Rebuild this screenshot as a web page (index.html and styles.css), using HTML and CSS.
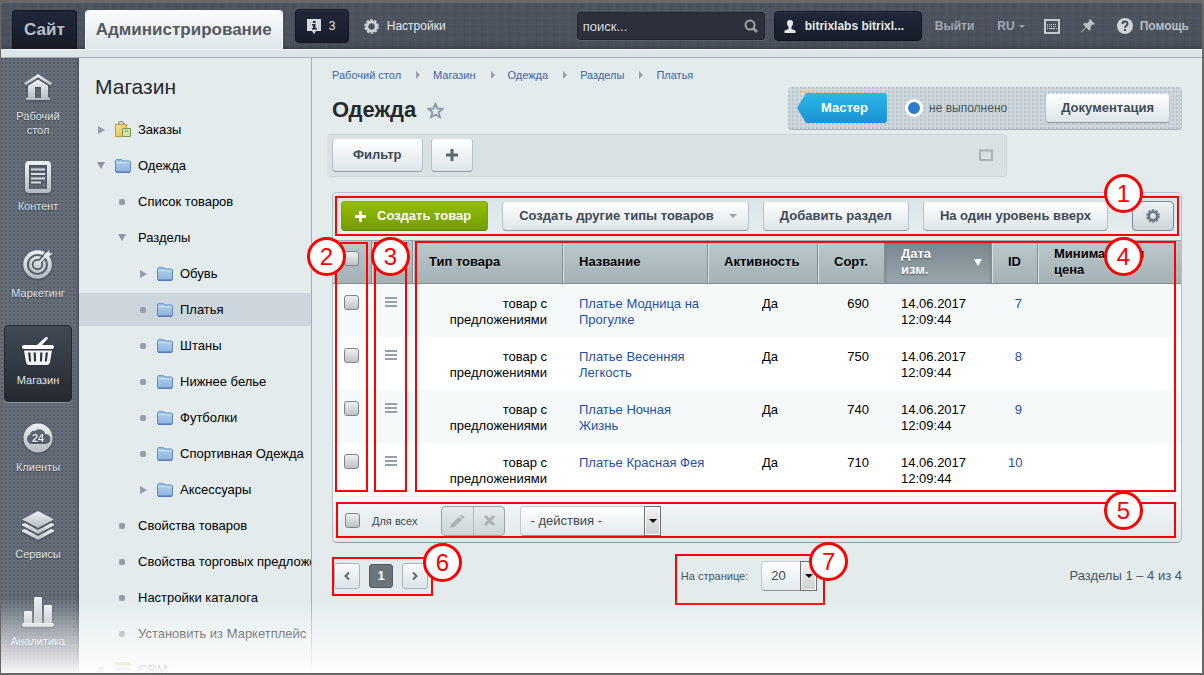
FILE: index.html
```html
<!DOCTYPE html>
<html lang="ru">
<head>
<meta charset="utf-8">
<meta name="viewport" content="width=device-width, initial-scale=1">
<title>Одежда</title>
<link rel="stylesheet" href="styles.css">
</head>
<body>
<svg class="defs" width="0" height="0" aria-hidden="true">
  <defs>
    <linearGradient id="metal" x1="0" y1="0" x2="0" y2="1"><stop offset="0" stop-color="#eef2f4"/><stop offset="1" stop-color="#b4bbbf"/></linearGradient>
    <linearGradient id="blue" x1="0" y1="0" x2="0" y2="1"><stop offset="0" stop-color="#b4d3ee"/><stop offset="1" stop-color="#8ab3dc"/></linearGradient>
    <linearGradient id="gold" x1="0" y1="0" x2="1" y2="1"><stop offset="0" stop-color="#fbe59a"/><stop offset="1" stop-color="#e0b23c"/></linearGradient>
  </defs>
  <symbol id="folder" viewBox="0 0 16 15">
    <path d="M.5 13.500v-11l1-1h5l1 1.500h7l1 1v9.500l-1 1h-13z" fill="url(#blue)" stroke="#5f87ba"/>
    <path d="M1.500 4.500h13" stroke="#d3e6f6"/><path d="M2 1.500h4.500v2H2z" fill="#8fb8e4"/><path d="M1 14h14" stroke="#4c70aa"/>
  </symbol>
  <symbol id="gear" viewBox="0 0 16 16">
    <circle cx="8" cy="8" r="4.900" fill="none" stroke="currentColor" stroke-width="3"/>
    <circle cx="8" cy="8" r="6.900" fill="none" stroke="currentColor" stroke-width="1.800" stroke-dasharray="2.700 1.635"/>
  </symbol>
</svg>
<div class="page">
  <header class="top">
    <nav class="tabs">
      <a class="tab" href="#">Сайт</a>
      <a class="tab tab-on" href="#">Администрирование</a>
    </nav>
    <button class="dark note" type="button">
      <svg width="14" height="15" viewBox="0 0 14 15"><path d="M0 0h14v12H9l-2 3-2-3H0z" fill="#d5dade"/><path d="M6 2h2.500v2H6zM5 5h3.500v4H10v1.500H5V9h1V6.500H5z" fill="#262c3a"/></svg>
      <span>3</span>
    </button>
    <a class="settings" href="#"><svg width="15" height="15"><use href="#gear"/></svg>Настройки</a>
    <form class="search">
      <input type="text" placeholder="поиск..." aria-label="поиск">
      <svg width="14" height="14" viewBox="0 0 14 14" fill="none" stroke="#9ca1a8"><circle cx="6" cy="6" r="4.500" stroke-width="2"/><path d="M9 9l4 4" stroke-width="2.500"/></svg>
    </form>
    <a class="dark user" href="#">
      <svg width="12" height="13" viewBox="0 0 12 13" fill="#e4e8eb"><path d="M6 0c2 0 3 1.200 3 3 0 1.600-.6 3-1.500 3.800V9l4 1.500V13H.5v-2.500l4-1.500V6.800C3.600 6 3 4.600 3 3c0-1.800 1-3 3-3z"/></svg>
      <span>bitrixlabs bitrixl...</span>
    </a>
    <a class="top-link exit" href="#">Выйти</a>
    <a class="top-link lang" href="#">RU<i class="tri-s"></i></a>
    <button class="ico keys" type="button" aria-label="Клавиши"><svg width="16" height="15" viewBox="0 0 16 15"><path d="M1 1h14v13H1z" fill="none" stroke="#c5cbd0" stroke-width="2"/><path d="M3 5.500h10M3 7.500h10" stroke="#c5cbd0" stroke-dasharray="1 1"/><path d="M3 9.500h1M5 9.500h6M12 9.500h1" stroke="#c5cbd0"/></svg></button>
    <button class="ico pin" type="button" aria-label="Закрепить"><svg width="14" height="14" viewBox="0 0 14 14"><path d="M9 0l5 5-1.500.7-1-.2-2 2.200.2 2.800-1.300 1.200-3-3.200L.5 13.500 0 13l4.800-5L2 5.200 3.200 4l3 .2 2-2L8 1z" fill="#bcc2c7"/></svg></button>
    <a class="top-link help" href="#"><svg width="16" height="16" viewBox="0 0 16 16"><circle cx="8" cy="8" r="8" fill="#ced4d8"/><path d="M5.500 6c0-3.200 5-3.200 5 0 0 1.800-2.500 1.800-2.500 3.800" fill="none" stroke="#434a56" stroke-width="2"/><path d="M7 11h2v2H7z" fill="#434a56"/></svg>Помощь</a>
  </header>
  <div class="strip"></div>

  <div class="main">
    <nav class="rail">
      <a href="#"><svg width="28" height="28" viewBox="0 0 28 28" fill="url(#metal)"><path d="M14 1L0 10l1.500 2.500L14 4.500l12.500 8L28 10z"/><path d="M14 6.500l-10 6.300v11.700H2V27h24v-2.500h-2V12.800zM11 25V14h6v11z" fill-rule="evenodd"/></svg><span>Рабочий<br>стол</span></a>
      <a href="#"><svg width="26" height="32" viewBox="0 0 26 32"><path d="M4 0h18a4 4 0 014 4v24a4 4 0 01-4 4H4a4 4 0 01-4-4V4a4 4 0 014-4zm0 4v24h18V4z" fill="url(#metal)" fill-rule="evenodd"/><path d="M6 8.500h14M6 13h14M6 17.500h14M6 21.500h10" stroke="#d7dde0" stroke-width="2"/></svg><span>Контент</span></a>
      <a href="#"><svg width="30" height="30" viewBox="0 0 30 30"><circle cx="14.500" cy="15.500" r="14.300" fill="url(#metal)"/><circle cx="14.500" cy="15.500" r="9.500" fill="none" stroke="#5c6370" stroke-width="2.200"/><circle cx="14.500" cy="15.500" r="4.800" fill="none" stroke="#5c6370" stroke-width="2"/><path d="M18 11.500l6-7" stroke="#5c6370" stroke-width="5"/><path d="M14.500 15.500L25 4.500" stroke="#e0e5e7" stroke-width="2.200"/><path d="M21 5.500L26.500 1v3.300H30L24.500 9H21z" fill="#e0e5e7"/></svg><span>Маркетинг</span></a>
      <a class="on" href="#"><svg width="32" height="28" viewBox="0 0 32 28"><path d="M0 10a2 2 0 012-2h13l8.500-7.700a1 1 0 012 1.700L20 8h10a2 2 0 010 4H2a2 2 0 01-2-2z" fill="#fff"/><path d="M2 13.500h28l-2 12a3 3 0 01-3 2.500H7a3 3 0 01-3-2.500zm4 2l1.200 9h2l-.9-9zm5.500 0l.6 9h2l-.3-9zm6.700 0l-.3 9h2l.6-9zm5.500 0l-.9 9h2l1.200-9z" fill="#f2f4f5" fill-rule="evenodd"/></svg><span>Магазин</span></a>
      <a href="#"><svg width="30" height="30" viewBox="0 0 30 30"><circle cx="15" cy="15" r="14.500" fill="url(#metal)"/><path d="M8 21a5 5 0 01-1-9.500 4 4 0 015-3.500 6 6 0 0110 3 5 5 0 011 10z" fill="#5c6370"/><text x="15" y="19" text-anchor="middle" class="cloud">24</text></svg><span>Клиенты</span></a>
      <a href="#"><svg width="32" height="29" viewBox="0 0 32 29" fill="url(#metal)"><path d="M16 0l16 8.500L16 17 0 8.500z"/><path d="M0 13l3-1 13 7 13-7 3 1v1.500L16 23 0 14.500z"/><path d="M0 19l3-1 13 7 13-7 3 1v1.500L16 29 0 20.500z"/></svg><span>Сервисы</span></a>
      <a href="#"><svg width="32" height="30" viewBox="0 0 32 30" fill="url(#metal)"><rect x="2" y="14" width="8" height="14" rx="1"/><rect x="12" y="0" width="8" height="28" rx="1"/><rect x="22" y="8" width="8" height="20" rx="1"/><rect y="26" width="32" height="4" rx="2"/></svg><span>Аналитика</span></a>
    </nav>

    <aside class="tree">
      <h2>Магазин</h2>
      <ul>
        <li><a href="#"><i class="mk shut"></i><svg width="16" height="17" viewBox="0 0 16 17"><path d="M3.500 4.500V3a2.500 2.500 0 015 0v1.500" fill="none" stroke="#77756a"/><path d="M.5 3.500h11v12H.5z" fill="url(#gold)" stroke="#c39a38"/><path d="M7.500 7.500h8v8h-8z" fill="#cfe0a4" stroke="#83994f"/><path d="M10 10h3" stroke="#7b8e50"/></svg>Заказы</a></li>
        <li><a href="#"><i class="mk open"></i><svg width="16" height="15"><use href="#folder"/></svg>Одежда</a></li>
        <li class="l2"><a href="#"><i class="mk dot"></i>Список товаров</a></li>
        <li class="l2"><a href="#"><i class="mk open"></i>Разделы</a></li>
        <li class="l3"><a href="#"><i class="mk shut"></i><svg width="16" height="15"><use href="#folder"/></svg>Обувь</a></li>
        <li class="l3 on"><a href="#"><i class="mk dot"></i><svg width="16" height="15"><use href="#folder"/></svg>Платья</a></li>
        <li class="l3"><a href="#"><i class="mk dot"></i><svg width="16" height="15"><use href="#folder"/></svg>Штаны</a></li>
        <li class="l3"><a href="#"><i class="mk dot"></i><svg width="16" height="15"><use href="#folder"/></svg>Нижнее белье</a></li>
        <li class="l3"><a href="#"><i class="mk dot"></i><svg width="16" height="15"><use href="#folder"/></svg>Футболки</a></li>
        <li class="l3"><a href="#"><i class="mk dot"></i><svg width="16" height="15"><use href="#folder"/></svg>Спортивная Одежда</a></li>
        <li class="l3"><a href="#"><i class="mk shut"></i><svg width="16" height="15"><use href="#folder"/></svg>Аксессуары</a></li>
        <li class="l2"><a href="#"><i class="mk dot"></i>Свойства товаров</a></li>
        <li class="l2"><a href="#"><i class="mk dot"></i>Свойства торговых предложений</a></li>
        <li class="l2"><a href="#"><i class="mk dot"></i>Настройки каталога</a></li>
        <li class="l2"><a href="#"><i class="mk dot"></i>Установить из Маркетплейс</a></li>
        <li><a href="#"><i class="mk dot"></i><svg width="16" height="15" viewBox="0 0 16 15"><path d="M0 0h16v4H0z" fill="#a2b541"/><path d="M2 5h12v4H2z" fill="#6fa6d2"/><path d="M4 10h8v4H4z" fill="#d0806a"/></svg>CRM</a></li>
      </ul>
    </aside>

    <main class="content">
      <nav class="crumbs">
        <a href="#">Рабочий стол</a><a href="#">Магазин</a><a href="#">Одежда</a><a href="#">Разделы</a><a href="#">Платья</a>
      </nav>
      <div class="heading">
        <h1>Одежда</h1>
        <button class="star" type="button" aria-label="В избранное"><svg width="17" height="17" viewBox="0 0 17 17"><path d="M8.500 1.800l2 4.700 5 .4-3.800 3.300 1.200 5-4.400-2.700-4.400 2.700 1.200-5-3.800-3.300 5-.4z" fill="none" stroke="#8c98a3" stroke-width="1.900"/></svg></button>
        <div class="wizard">
          <button class="master" type="button"><span>Мастер</span></button>
          <span class="state"><i></i>не выполнено</span>
          <button class="btn" type="button">Документация</button>
        </div>
      </div>

      <div class="filter">
        <button class="btn tall" type="button">Фильтр</button>
        <button class="btn tall plus" type="button" aria-label="Добавить"><svg width="14" height="14" viewBox="0 0 14 14"><path d="M7 1v12M1 7h12" stroke="#5f656d" stroke-width="3"/></svg></button>
        <button class="ico fold" type="button" aria-label="Свернуть"><svg width="14" height="12" viewBox="0 0 14 12"><path d="M1 1.500h12V11H1z" fill="none" stroke="#a9b2b5" stroke-width="2"/></svg></button>
      </div>

      <section class="list">
        <div class="tools">
          <button class="btn green" type="button"><svg width="11" height="11" viewBox="0 0 11 11"><path d="M5.500 0v11M0 5.500h11" stroke="#fff" stroke-width="3"/></svg>Создать товар</button>
          <button class="btn" type="button">Создать другие типы товаров<i class="tri-s"></i></button>
          <button class="btn" type="button">Добавить раздел</button>
          <button class="btn" type="button">На один уровень вверх</button>
          <button class="btn cog" type="button" aria-label="Настроить"><svg width="14" height="14"><use href="#gear"/></svg></button>
          <div class="mark m1"><b>1</b></div>
        </div>
        <div class="grid">
          <table>
            <colgroup><col class="c-check"><col class="c-menu"><col class="c-type"><col class="c-name"><col class="c-act"><col class="c-sort"><col class="c-date"><col class="c-id"><col></colgroup>
            <thead>
              <tr><th class="check"><input type="checkbox" aria-label="Выбрать все"></th><th></th><th>Тип товара</th><th>Название</th><th>Активность</th><th>Сорт.</th><th class="sorted"><span>Дата изм.<i></i></span></th><th>ID</th><th>Минимальная цена</th></tr>
            </thead>
            <tbody>
              <tr><td class="check"><input type="checkbox" aria-label="Выбрать 7"></td><td class="menu"><button class="bars" type="button" aria-label="Действия"></button></td><td class="r">товар с предложениями</td><td class="name"><a href="#">Платье Модница на Прогулке</a></td><td class="act">Да</td><td class="r">690</td><td>14.06.2017 12:09:44</td><td class="r"><a href="#">7</a></td><td></td></tr>
              <tr><td class="check"><input type="checkbox" aria-label="Выбрать 8"></td><td class="menu"><button class="bars" type="button" aria-label="Действия"></button></td><td class="r">товар с предложениями</td><td class="name"><a href="#">Платье Весенняя Легкость</a></td><td class="act">Да</td><td class="r">750</td><td>14.06.2017 12:09:44</td><td class="r"><a href="#">8</a></td><td></td></tr>
              <tr><td class="check"><input type="checkbox" aria-label="Выбрать 9"></td><td class="menu"><button class="bars" type="button" aria-label="Действия"></button></td><td class="r">товар с предложениями</td><td class="name"><a href="#">Платье Ночная<br>Жизнь</a></td><td class="act">Да</td><td class="r">740</td><td>14.06.2017 12:09:44</td><td class="r"><a href="#">9</a></td><td></td></tr>
              <tr><td class="check"><input type="checkbox" aria-label="Выбрать 10"></td><td class="menu"><button class="bars" type="button" aria-label="Действия"></button></td><td class="r">товар с предложениями</td><td class="name"><a href="#">Платье Красная Фея</a></td><td class="act">Да</td><td class="r">710</td><td>14.06.2017 12:09:44</td><td class="r"><a href="#">10</a></td><td></td></tr>
            </tbody>
          </table>
          <div class="mark m2"><b>2</b></div>
          <div class="mark m3"><b>3</b></div>
          <div class="mark m4"><b>4</b></div>
        </div>
        <div class="bulk">
          <label class="all"><input type="checkbox">Для всех</label>
          <div class="pair">
            <button type="button" aria-label="Изменить"><svg width="15" height="14" viewBox="0 0 15 14" fill="#abb0b3"><path d="M0 14l1.200-4L9 2.800l3 3L4 13zM10 2l1.500-1.500 3 3L13 5z"/></svg></button>
            <button type="button" aria-label="Удалить"><svg width="11" height="11" viewBox="0 0 11 11"><path d="M1 1l9 9M10 1l-9 9" stroke="#abb0b3" stroke-width="3"/></svg></button>
          </div>
          <span class="pick action"><select aria-label="Действия"><option>- действия -</option></select><i></i></span>
          <div class="mark m5"><b>5</b></div>
        </div>
      </section>

      <div class="pager">
        <div class="pages">
          <button type="button" aria-label="Назад"><svg width="6" height="8" viewBox="0 0 6 8"><path d="M5 .5L1.500 4 5 7.500" fill="none" stroke="#5f6973" stroke-width="2"/></svg></button>
          <button type="button" class="cur">1</button>
          <button type="button" aria-label="Вперед"><svg width="6" height="8" viewBox="0 0 6 8"><path d="M1 .5L4.500 4 1 7.500" fill="none" stroke="#5f6973" stroke-width="2"/></svg></button>
          <div class="mark m6"><b>6</b></div>
        </div>
        <div class="per">
          <label for="per">На странице:</label>
          <span class="pick size"><select id="per"><option>20</option></select><i></i></span>
          <div class="mark m7"><b>7</b></div>
        </div>
        <span class="total">Разделы 1 – 4 из 4</span>
      </div>
    </main>
  </div>
  <div class="fade"></div>
</div>
</body>
</html>
```
FILE: styles.css
```css
* { box-sizing: border-box; }
body { margin: 0; font: 13px/16px "Liberation Sans", Arial, sans-serif; color: #000; }
a { color: inherit; text-decoration: none; }
button, input, select { font: inherit; color: inherit; margin: 0; }
button { cursor: pointer; }
h1, h2, ul { margin: 0; padding: 0; font-weight: normal; }
ul { list-style: none; }
svg { flex: none; display: block; }
.defs { position: absolute; }

.page {
  position: relative; display: flex; flex-direction: column;
  height: 100vh; min-height: 480px; overflow: hidden;
  border: solid #696969; border-width: 3px 2px 2px 1px; background: #e3ebed;
}

/* top bar */
.top {
  display: flex; align-items: center; height: 46px; padding: 0 13px 0 11px; flex: none;
  font-size: 12px; color: #e3e7ea;
  background:
    repeating-linear-gradient(90deg, rgba(255,255,255,.02) 0 1px, transparent 1px 4px, rgba(0,0,0,.04) 4px 5px, transparent 5px 9px),
    repeating-linear-gradient(rgba(255,255,255,.02) 0 1px, transparent 1px 3px, rgba(0,0,0,.04) 3px 4px, transparent 4px 7px),
    linear-gradient(#4d545f, #4b525d 85%, #3f4550);
}
.tabs { display: flex; gap: 8px; align-self: flex-end; }
.tab {
  height: 39px; line-height: 38px; padding: 0 11px; font-size: 17px; font-weight: bold; color: #b9c0c8;
  background: linear-gradient(#20273a, #171b26); border: 1px solid #12151d; border-bottom: 0; border-radius: 4px 4px 0 0;
}
.tab-on { padding: 0 10px; color: #555a62; background: linear-gradient(#fbfcfc, #dde6ea); border-color: #f5f8f9; }
.dark {
  display: flex; align-items: center; background: linear-gradient(#20273a, #191d29);
  border: 1px solid #12151d; border-radius: 4px; box-shadow: inset 0 1px 0 #2d3547;
}
.note { width: 54px; height: 34px; margin-left: 12px; padding: 0 0 0 11px; gap: 8px; }
.settings { display: flex; align-items: center; gap: 8px; margin-left: 15px; color: #e3e7ea; }
.settings svg { color: #cfd4d8; }
.search { position: relative; width: 188px; margin-left: auto; }
.search input {
  width: 100%; height: 28px; padding: 0 28px 0 5px; font-size: 13px; color: #d9dee1; background: #2c303c;
  border: 1px solid #22252f; border-radius: 3px; box-shadow: 0 1px 0 #5b626d;
}
.search input::placeholder { color: #d9dee1; opacity: 1; }
.search svg { position: absolute; right: 7px; top: 7px; }
.user { width: 148px; height: 30px; margin-left: 9px; padding: 0 9px; gap: 9px; font-weight: bold; }
.top-link { display: flex; align-items: center; font-weight: bold; color: #a3a9b1; }
.exit { margin-left: 13px; }
.lang { margin-left: 23px; }
.tri-s { width: 0; height: 0; border: 4px solid transparent; border-top-color: #9ba2a8; border-bottom: 0; }
.lang .tri-s { margin-left: 4px; border-width: 3px 3px 0; }
.ico { display: flex; padding: 0; border: 0; background: none; }
.keys { margin-left: 19px; }
.pin { margin-left: 21px; }
.help { margin-left: 22px; gap: 7px; color: #b9bfc5; }
.strip { flex: none; height: 9px; background: #dce5e9; border-bottom: 1px solid #a3aeb2; border-top: 1px solid #f6f9fa; }

.main { flex: 1; display: flex; min-height: 0; }

/* section rail */
.rail {
  flex: none; width: 78px; padding: 3px 7px 0 3px; display: flex; flex-direction: column; gap: 10px;
  background: radial-gradient(circle at 1px 1px, rgba(72,78,90,.5) 1px, transparent 1px) 0 0 / 4px 4px, linear-gradient(90deg, #656d79 95%, #4f5661);
}
.rail a {
  flex: none; display: grid; grid-template-rows: 32px auto; gap: 6px; min-height: 77px; padding: 10px 0 4px;
  justify-items: center; align-items: center; align-content: start; text-align: center;
  font-size: 11px; line-height: 14px; color: #dde2e6; text-shadow: 0 1px 1px #3b404a;
}
.rail svg { filter: drop-shadow(0 1px 1px rgba(30,34,42,.5)); }
.rail .on { background: linear-gradient(#434954, #242932); border: 1px solid #22262e; border-radius: 4px; padding-top: 9px; box-shadow: 0 1px 0 #8d949d; }
.cloud { font: bold 11px "Liberation Sans", Arial, sans-serif; fill: #e3e8ea; }

/* tree */
.tree { flex: none; width: 233px; overflow: hidden; background: #e3ebed; border-right: 1px solid #9eb0bc; }
.tree h2 { padding: 17px 0 15px 16px; font-size: 21px; line-height: 23px; color: #26292d; }
.tree ul { display: grid; gap: 3px; }
.tree a { display: flex; align-items: center; height: 33px; padding-left: 17px; white-space: nowrap; }
.tree svg { margin-right: 7px; }
.tree .l2 a { padding-left: 38px; }
.tree .l2 .mk { margin-right: 11px; }
.tree .l3 a { padding-left: 59px; }
.tree .on { background: #ccd6dc; }
.mk { flex: none; display: flex; justify-content: center; width: 10px; margin-right: 9px; }
.mk::before { content: ""; }
.dot::before { width: 6px; height: 6px; border-radius: 2px; background: #949da8; }
.shut::before { border: 4px solid transparent; border-left: 7px solid #949da8; border-right: 0; }
.open::before { border: 4px solid transparent; border-top: 7px solid #8d97a2; border-bottom: 0; }

/* content */
.content { flex: 1; min-width: 0; padding: 10px 20px 0 20px; }
.crumbs { display: flex; font-size: 11px; line-height: 14px; color: #3f64a5; }
.crumbs a { display: flex; align-items: center; }
.crumbs a + a::before { content: ""; margin: 0 13px 0 15px; border: 4px solid transparent; border-left-color: #97a0a8; border-right: 0; }
.heading { display: flex; align-items: center; margin-top: 5px; }
h1 { padding-top: 2px; font-size: 22px; line-height: 26px; font-weight: bold; color: #26292d; }
.star { padding: 4px 0 0; margin-left: 11px; border: 0; background: none; }
.wizard {
  display: flex; align-items: center; height: 43px; margin-left: auto; padding: 0 12px 0 9px; border-radius: 4px;
  background: radial-gradient(circle at 1px 1px, #b9c5cb 1px, transparent 1px) 0 0 / 4px 4px, #cdd7dc; border-bottom: 1px solid #a5b0b5;
}
.master {
  width: 90px; height: 30px; padding: 0 0 0 5px; border: 0; color: #fff; font-weight: bold; border-radius: 3px;
  background: linear-gradient(#2bb7e6, #1b92d4); clip-path: polygon(0 50%, 9px 0, 100% 0, 100% 100%, 9px 100%);
}
.state { display: flex; align-items: center; gap: 6px; margin: 0 38px 0 18px; font-size: 12px; color: #4b5560; }
.state i { flex: none; width: 18px; height: 18px; border: 3px solid #fff; border-radius: 50%; background: #2a7ecb; }
.btn {
  display: flex; align-items: center; justify-content: center; height: 30px; padding: 0 16px; white-space: nowrap;
  font-weight: bold; color: #3f4b54; background: linear-gradient(#fff, #dde5e9);
  border: 1px solid #b7c2c8; border-top-color: #d9e1e4; border-bottom-color: #8f9ba1; border-radius: 4px;
}
.wizard .btn { padding: 0 15px; }
.filter {
  display: flex; align-items: center; gap: 8px; width: 80%; height: 43px; margin: 4px 0 15px -5px; padding: 0 13px 1px 4px;
  background: #d9e1e3; border: 1px solid #ccd5d8; border-left-color: #d9e1e3; border-radius: 4px;
}
.filter .tall { height: 34px; padding: 0 20px; }
.filter .plus { padding: 0 13px; }
.fold { margin-left: auto; }
.list { border: 1px solid #b2bfc5; border-bottom-color: #8f9a9f; border-radius: 5px; }
.tools {
  position: relative; display: flex; align-items: center; gap: 14px; height: 47px; padding: 0 7px 2px 8px;
  background: linear-gradient(#dae3e6, #e9eff1); border-top: 1px solid #f5f8f9; border-radius: 4px 4px 0 0;
}
.tools .tri-s { margin: 0 -5px 0 15px; }
.tools .green { padding: 0 16px 0 13px; gap: 11px; color: #fff; background: linear-gradient(#95bd00, #739c00); border-color: #85ac00 #7ba200 #5c7e00; }
.tools .cog { width: 42px; padding: 0; margin-left: auto; color: #6f787e; border-color: #7e898f; background: linear-gradient(#eef1f3, #ccd5d9); }

/* goods table */
.grid { position: relative; }
table { width: 100%; table-layout: fixed; border-collapse: separate; border-spacing: 0; }
.c-check { width: 39px; }
.c-menu { width: 41px; }
.c-type { width: 150px; }
.c-name { width: 145px; }
.c-act { width: 110px; }
.c-sort { width: 67px; }
.c-date { width: 107px; }
.c-id { width: 46px; }
th {
  height: 44px; padding: 0 15px 0 16px; text-align: left; background: linear-gradient(#bac8cd, #a5b2b4);
  border: solid #838f93; border-width: 1px 1px 1px 0; border-top-color: #9aa7ac; box-shadow: inset 1px 0 0 #d6dfe2; text-shadow: 0 1px 0 #d0dadd;
}
th:last-child { padding-right: 30px; border-right: 0; }
.sorted { padding-right: 9px; color: #fff; text-shadow: 0 1px 1px #4e585e; background: linear-gradient(#7a868d, #98a5ab); box-shadow: inset 0 2px 3px #69757c; }
.sorted span { display: flex; align-items: center; gap: 32px; }
.sorted i { flex: none; border: 4px solid transparent; border-top: 7px solid #fff; border-bottom: 0; }
td { height: 53px; padding: 12px 16px 9px; vertical-align: top; background: #fff; }
tbody tr:nth-child(odd) td { background: #f5f9fa; }
tbody tr:last-child td { border-bottom: 1px solid #edf1f2; }
td a { color: #1f4fa8; }
.r { text-align: right; }
td.name { padding-right: 0; }
td.act { padding-left: 54px; }
td.menu { padding: 13px 0 0 13px; }
.check { padding: 11px 0 0 11px; }
th.check { padding: 0 0 8px 11px; }
input[type="checkbox"] {
  appearance: none; display: block; width: 15px; height: 15px; background: linear-gradient(#f0f1f2, #bfc2c4);
  border: 1px solid #7d8386; border-radius: 3px;
}
.bars { display: block; width: 12px; height: 10px; padding: 0; border: 0; background: repeating-linear-gradient(#95a0a8 0 2px, transparent 2px 4px); }
.bulk {
  position: relative; display: flex; align-items: center; height: 45px; padding: 2px 12px 0; color: #3d464d;
  background: linear-gradient(#f5f7f8, #dfe7ea); border-radius: 0 0 5px 5px;
}
.all { display: flex; align-items: center; gap: 12px; font-size: 11px; }
.pair { display: flex; margin: 0 15px 0 24px; border: 1px solid #9ba5a9; border-radius: 4px; background: linear-gradient(#e5eaec, #ccd6d9); }
.pair button { display: grid; place-items: center; width: 31px; height: 28px; padding: 0; border: 0; background: none; }
.pair button + button { border-left: 1px solid #b0babd; }
.pick { position: relative; display: block; height: 30px; }
.pick select {
  appearance: none; width: 100%; height: 100%; padding: 0 9px; color: #3f4851; background: linear-gradient(#fff, #e1e9ec);
  border: 1px solid #c1cbcf; border-bottom-color: #8d979c; border-radius: 4px;
}
.pick i {
  position: absolute; right: 0; top: 0; bottom: 0; width: 17px; display: grid; place-items: center; pointer-events: none;
  background: linear-gradient(#f3f3f3, #cfcfcf); border: 1px solid #6c6c6c; box-shadow: inset 0 0 0 1px #fafafa;
}
.pick i::before { content: ""; border: 4px solid transparent; border-top-color: #000; border-bottom: 0; }
.action { width: 141px; }
.size { width: 56px; }

/* pagination */
.pager { display: grid; grid-template-columns: 1fr auto 1fr; align-items: center; margin-top: 18px; color: #49545d; }
.pages { position: relative; display: flex; justify-self: start; gap: 9px; margin-left: 2px; }
.pages button {
  display: grid; place-items: center; width: 26px; height: 26px; padding: 0; font-weight: bold;
  background: linear-gradient(#f8fafb, #dae4e8); border: 1px solid #a8b4ba; border-radius: 3px;
}
.pages .cur { width: 24px; height: 24px; align-self: center; color: #fff; background: #6a7379; border-color: #515a60; }
.per { position: relative; display: flex; align-items: center; gap: 13px; margin-right: 16px; }
.per label { font-size: 11px; }
.total { justify-self: end; }

/* numbered callouts */
.mark { position: absolute; border: 2px solid #f00; pointer-events: none; z-index: 2; }
.mark b {
  position: absolute; display: grid; place-items: center; width: 39px; height: 39px;
  font-size: 24px; font-weight: normal; color: #f00; background: #fff; border: 3px solid #f00; border-radius: 50%;
}
.m1 { inset: 2px 2px 4px 2px; }
.m1 b { right: 34px; top: -24px; }
.m2 { left: 2px; top: 2px; bottom: 5px; width: 33px; }
.m2 b { left: -30px; top: -7px; }
.m3 { left: 41px; top: 2px; bottom: 5px; width: 33px; }
.m3 b { left: -5px; top: -7px; }
.m4 { inset: 1px 5px 5px 82px; }
.m4 b { right: 31px; top: -6px; }
.m5 { inset: 5px 5px 4px 3px; }
.m5 b { right: 31px; top: -13px; }
.m6 { inset: -6px -5px -7px -2px; }
.m6 b { right: -31px; top: -16px; }
.m7 { inset: -7px -8px -14px -6px; }
.m7 b { right: -25px; top: -14px; }

.fade {
  position: absolute; inset: auto 0 0; height: 75px; z-index: 5; pointer-events: none;
  background: linear-gradient(rgba(255,255,255,0), rgba(255,255,255,.5) 50%, rgba(255,255,255,.8) 85%, rgba(255,255,255,.95));
}
```
